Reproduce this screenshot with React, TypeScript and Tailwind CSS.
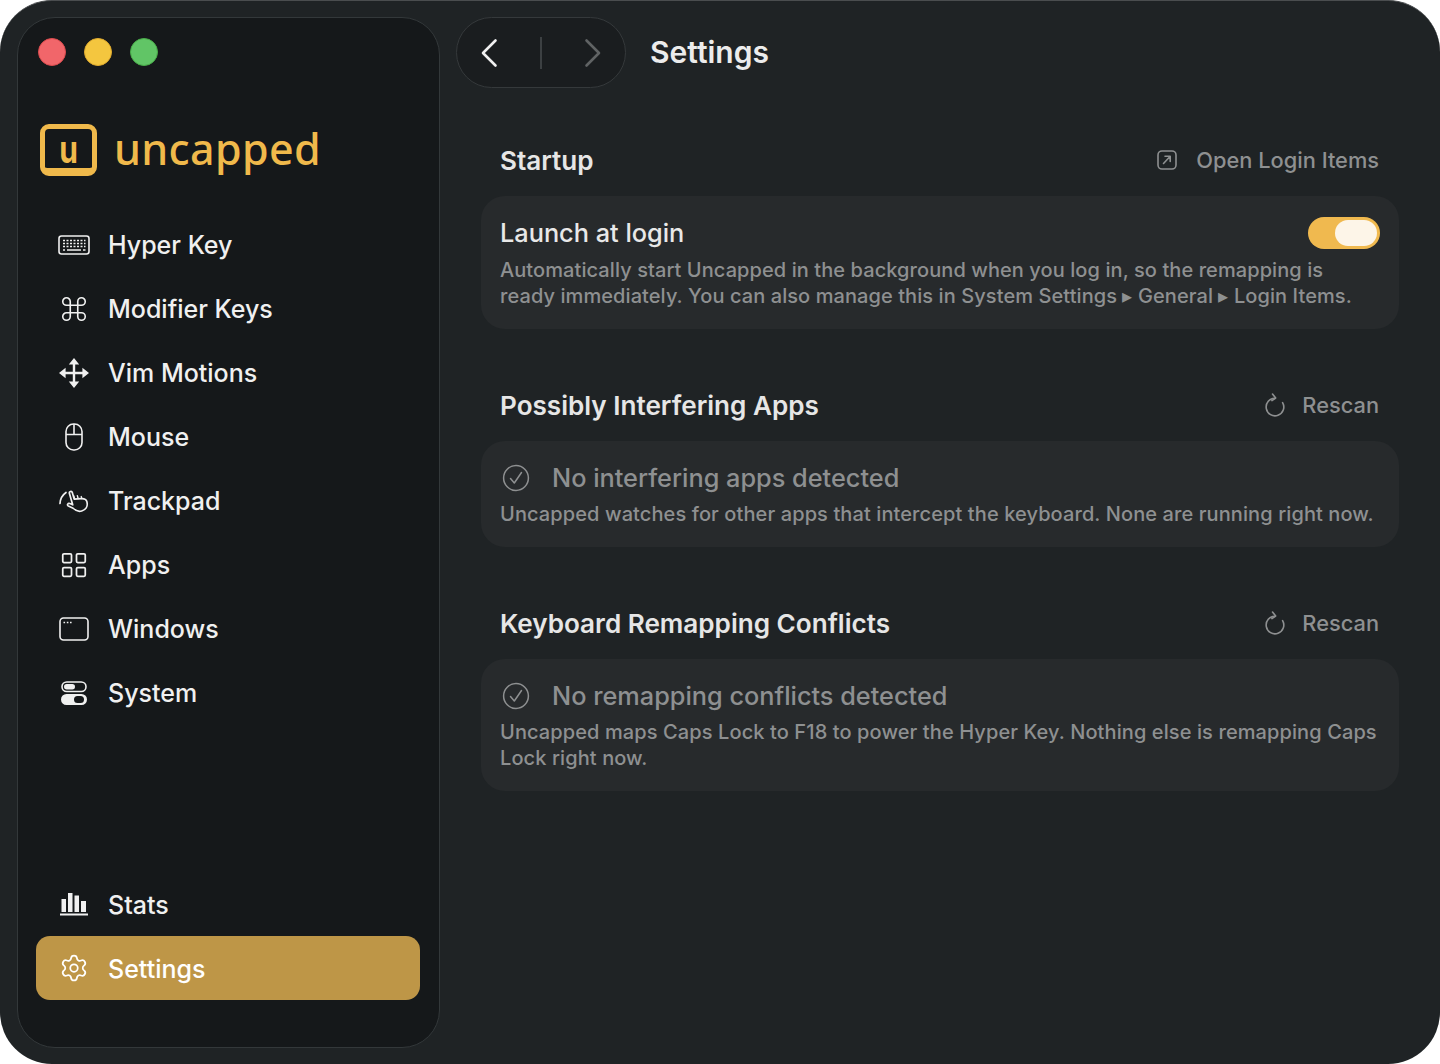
import { Command, LayoutGrid, Settings as Gear } from "lucide-react";
import type { ReactNode } from "react";

function KeyboardIcon() {
  return (
    <svg width="32" height="20" viewBox="0 0 32 20" fill="none">
      <rect x="1" y="1" width="30" height="18" rx="2.5" stroke="currentColor" strokeWidth="1.6" />
      <path
        d="M5 5.5h2M8.5 5.5h2M12 5.5h2M15.5 5.5h2M19 5.5h2M22.5 5.5h2M26 5.5h1.5M5 8.5h2M8.5 8.5h2M12 8.5h2M15.5 8.5h2M19 8.5h2M22.5 8.5h2M26 8.5h1.5M5 11.5h2M8.5 11.5h2M12 11.5h2M15.5 11.5h2M19 11.5h2M22.5 11.5h2M26 11.5h1.5M5 15h2M9 15h14M25 15h2.5"
        stroke="currentColor"
        strokeWidth="1.7"
      />
    </svg>
  );
}

function MoveIcon() {
  return (
    <svg width="30" height="30" viewBox="0 0 30 30" fill="currentColor">
      <path d="M15 0l5.2 6.6H9.8zM15 30l-5.2-6.6h10.4zM0 15l6.6-5.2v10.4zM30 15l-6.6 5.2V9.8z" />
      <path d="M15 5v20M5 15h20" stroke="currentColor" strokeWidth="2.4" />
    </svg>
  );
}

function MouseIcon() {
  return (
    <svg width="18" height="28" viewBox="0 0 18 28" fill="none" stroke="currentColor" strokeWidth="1.6">
      <rect x="1" y="1" width="16" height="26" rx="7.5" />
      <path d="M1 11.5h16M9 1v10.5" />
    </svg>
  );
}

function HandIcon() {
  return (
    <svg width="30" height="27" viewBox="0 0 30 27" fill="none" stroke="currentColor" strokeWidth="1.7" strokeLinecap="round" strokeLinejoin="round">
      <g transform="rotate(-16 16 14)">
        <path d="M12.5 19.5l-4-3.4c-1.5-1.6.6-3.3 2.1-2l2.4 2V4.2c0-2.1 3-2.1 3 0V11l7 1.5c2.2.5 4.5 1.8 4.5 4.3 0 4.5-3 7.7-7.5 7.7-3.6 0-5.5-1.4-7.5-5z" />
        <path d="M16.5 11V7.5M20 11.5v-3M23.5 12.5v-2" strokeWidth="1.4" />
      </g>
      <path d="M1 15.5C1.2 11 3.5 7 7 4.5" />
    </svg>
  );
}

function WindowIcon() {
  return (
    <svg width="30" height="24" viewBox="0 0 30 24" fill="none">
      <rect x="1" y="1" width="28" height="22" rx="3.5" stroke="currentColor" strokeWidth="1.6" />
      <path d="M4.5 5.5h1.6M7.8 5.5h1.6M11 5.5h1.6" stroke="currentColor" strokeWidth="1.6" />
    </svg>
  );
}

function TogglesIcon() {
  return (
    <svg width="26" height="24" viewBox="0 0 26 24" fill="none">
      <rect x="1" y="1" width="24" height="9.5" rx="4.75" stroke="currentColor" strokeWidth="1.6" />
      <rect x="3" y="3" width="11" height="5.5" rx="2.75" fill="currentColor" />
      <path
        fillRule="evenodd"
        d="M5.5 13h15a5.5 5.5 0 010 11h-15a5.5 5.5 0 010-11zM19.5 15h-3a3.5 3.5 0 000 7h3a3.5 3.5 0 000-7z"
        fill="currentColor"
      />
    </svg>
  );
}

function BarsIcon() {
  return (
    <svg width="28" height="24" viewBox="0 0 28 24" fill="currentColor">
      <rect x="1.5" y="7" width="4.5" height="13" />
      <rect x="8" y="1" width="4.5" height="19" />
      <rect x="14.5" y="3.5" width="4.5" height="16.5" />
      <rect x="21" y="9" width="5" height="11" />
      <rect x="0" y="21.5" width="28" height="2" />
    </svg>
  );
}

function RescanIcon() {
  return (
    <svg width="20" height="24" viewBox="0 0 20 24" fill="none" stroke="currentColor" strokeWidth="1.6" strokeLinecap="round" strokeLinejoin="round">
      <path d="M10 5.2A8.8 8.8 0 1017.6 9.6" />
      <path d="M7.5 1l3.2 4-3.8 2.6" />
    </svg>
  );
}

function OpenIcon() {
  return (
    <svg width="22" height="22" viewBox="0 0 22 22" fill="none" stroke="currentColor" strokeWidth="1.6" strokeLinecap="round" strokeLinejoin="round">
      <rect x="2" y="2" width="18" height="18" rx="4" />
      <path d="M7.5 14.5l6.5-7M9 7.2h5.2v5.3" />
    </svg>
  );
}

function CheckIcon() {
  return (
    <svg width="28" height="28" viewBox="0 0 28 28" fill="none" stroke="currentColor" strokeWidth="1.5" strokeLinecap="round" strokeLinejoin="round">
      <circle cx="14" cy="14" r="12.4" />
      <path d="M8.5 14.5l3.8 4.5L19.5 8.5" />
    </svg>
  );
}

function Chevron({ flip, className }: { flip?: boolean; className: string }) {
  return (
    <svg width="18" height="30" viewBox="0 0 18 30" fill="none" stroke="currentColor" strokeWidth="2.6" strokeLinecap="round" strokeLinejoin="round" className={className}>
      <path d={flip ? "M2.5 2.5L15 15 2.5 27.5" : "M15.5 2.5L3 15l12.5 12.5"} />
    </svg>
  );
}

const mainNav: { label: string; icon: ReactNode }[] = [
  { label: "Hyper Key", icon: <KeyboardIcon /> },
  { label: "Modifier Keys", icon: <Command size={30} strokeWidth={1.3} /> },
  { label: "Vim Motions", icon: <MoveIcon /> },
  { label: "Mouse", icon: <MouseIcon /> },
  { label: "Trackpad", icon: <HandIcon /> },
  { label: "Apps", icon: <LayoutGrid size={30} strokeWidth={1.4} /> },
  { label: "Windows", icon: <WindowIcon /> },
  { label: "System", icon: <TogglesIcon /> },
];

function NavItem({ label, icon, active, low }: { label: string; icon: ReactNode; active?: boolean; low?: boolean }) {
  return (
    <div className={`flex h-16 items-center gap-4 rounded-[14px] pl-5 text-[25px] font-[450] ${active ? "bg-[#be9647] text-white" : "text-[#f0f0f0]"}`}>
      <span className="flex w-9 justify-center">{icon}</span>
      <span className={low ? "pt-[4px]" : "pt-[2px]"}>{label}</span>
    </div>
  );
}

function SectionHeader({ title, action, icon, gap }: { title: string; action: string; icon: ReactNode; gap: string }) {
  return (
    <div className="flex h-[40px] items-center justify-between pl-[19px] pr-[20px]">
      <h2 className="pt-[2px] text-[26.1px] font-semibold text-[#e6e6e6]">{title}</h2>
      <div className={`flex items-center text-[21.8px] font-[450] text-[#8e9091] ${gap}`}>
        {icon}
        <span>{action}</span>
      </div>
    </div>
  );
}

function StatusCard({ title, children }: { title: string; children: ReactNode }) {
  return (
    <div className="mt-[16px] rounded-[24px] bg-[#272a2c] px-[19px] pb-[20px] pt-[19px]">
      <div className="flex h-[36px] items-center gap-[22px] pl-[2px] text-[25.3px] font-[450] text-[#8e9091]">
        <CheckIcon />
        <span>{title}</span>
      </div>
      <p className="mt-[5px] text-[20px] font-[450] leading-[26px] tracking-[0.1px] text-[#8e9091]">{children}</p>
    </div>
  );
}

export default function App() {
  return (
    <div className="min-h-[1064px] bg-white font-['Inter',sans-serif]">
      <div className="flex h-[1064px] rounded-[52px] border-t border-t-[#4a4d4f] bg-[#1f2325] pb-[16px] pl-[17px] pt-[16px]">
        <aside className="flex w-[423px] flex-col rounded-[38px] border-[1.5px] border-[#33383a] bg-[#15181a] pl-[18px] pr-[19px]">
          <div className="flex gap-[18px] pl-[2px] pt-[20px]">
            <span className="h-7 w-7 rounded-full border border-[#dc4b4e] bg-[#f1666a]" />
            <span className="h-7 w-7 rounded-full border border-[#dfaa2e] bg-[#f4c63f]" />
            <span className="h-7 w-7 rounded-full border border-[#48ac48] bg-[#61c566]" />
          </div>
          <div className="ml-[4px] mt-[58px] flex items-center gap-[17px] text-[#f0b94b]">
            <div className="flex h-[52px] w-[57px] items-center justify-center rounded-[9px] border-[5px] border-b-[8px] border-[#f0b94b]">
              <span className="scale-y-[1.25] text-[30px] font-bold leading-none">u</span>
            </div>
            <span className="mb-[4px] font-['Noto_Sans',sans-serif] text-[43px] font-medium leading-none tracking-[0.35px]">uncapped</span>
          </div>
          <nav className="mt-[37px] flex flex-col">
            {mainNav.map((item) => (
              <NavItem key={item.label} label={item.label} icon={item.icon} />
            ))}
          </nav>
          <div className="mb-[47px] mt-auto flex flex-col">
            <NavItem label="Stats" icon={<BarsIcon />} low />
            <NavItem label="Settings" icon={<Gear size={30} strokeWidth={1.4} />} active low />
          </div>
        </aside>

        <main className="flex-1">
          <header className="flex items-center gap-[24px] pl-[16px]">
            <div className="flex h-[71px] w-[170px] items-center justify-between rounded-full border-[1.5px] border-[#35393b] bg-[#1a1d1f] px-[23px]">
              <Chevron className="text-[#f0f0f0]" />
              <span className="h-[32px] w-[2px] bg-[#3c4042]" />
              <Chevron flip className="text-[#606364]" />
            </div>
            <h1 className="text-[30px] font-semibold text-[#ececec]">Settings</h1>
          </header>

          <div className="ml-[41px] mr-[41px] mt-[52px]">
            <section>
              <SectionHeader title="Startup" action="Open Login Items" gap="gap-[18px]" icon={<OpenIcon />} />
              <div className="mt-[16px] rounded-[24px] bg-[#272a2c] px-[19px] pb-[20px] pt-[19px]">
                <div className="flex h-[36px] items-center justify-between">
                  <span className="text-[25.3px] font-[450] text-[#e8e8e8]">Launch at login</span>
                  <span className="flex h-[32px] w-[72px] items-center justify-end rounded-full bg-[#f0b94f] pr-[3px]">
                    <span className="h-[26px] w-[42px] rounded-full bg-[#fdf5e8]" />
                  </span>
                </div>
                <p className="mt-[6px] text-[20px] font-[450] leading-[26px] tracking-[0.08px] text-[#8e9091]">
                  Automatically start Uncapped in the background when you log in, so the remapping is ready immediately. You can also manage this in System Settings ▸ General ▸ Login Items.
                </p>
              </div>
            </section>

            <section className="mt-[56px]">
              <SectionHeader title="Possibly Interfering Apps" action="Rescan" gap="gap-[17px]" icon={<RescanIcon />} />
              <StatusCard title="No interfering apps detected">
                Uncapped watches for other apps that intercept the keyboard. None are running right now.
              </StatusCard>
            </section>

            <section className="mt-[56px]">
              <SectionHeader title="Keyboard Remapping Conflicts" action="Rescan" gap="gap-[17px]" icon={<RescanIcon />} />
              <StatusCard title="No remapping conflicts detected">
                Uncapped maps Caps Lock to F18 to power the Hyper Key. Nothing else is remapping Caps Lock right now.
              </StatusCard>
            </section>
          </div>
        </main>
      </div>
    </div>
  );
}
